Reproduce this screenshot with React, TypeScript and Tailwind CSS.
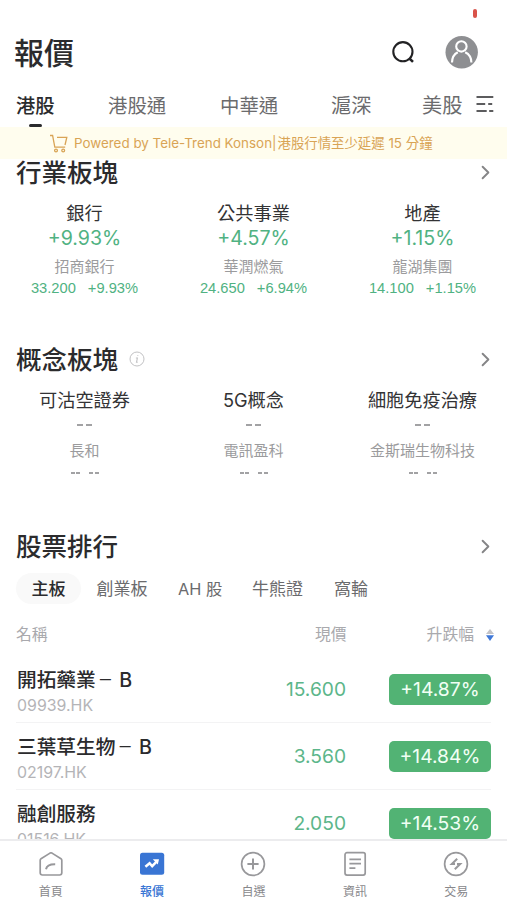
import { ChevronRight } from "lucide-react";
import clsx from "clsx";

const markets = [
  { label: "港股", pos: "w-[92px] text-[19.3px]" },
  { label: "港股通", pos: "w-[112px] text-[19.4px]" },
  { label: "中華通", pos: "w-[111px] text-[19.4px]" },
  { label: "滬深", pos: "w-[91px] text-[20.2px]" },
  { label: "美股", pos: "w-[54px] text-[20.2px]" },
];

const industries = [
  { name: "銀行", change: "+9.93%", stock: "招商銀行", price: "33.200", pct: "+9.93%" },
  { name: "公共事業", change: "+4.57%", stock: "華潤燃氣", price: "24.650", pct: "+6.94%" },
  { name: "地產", change: "+1.15%", stock: "龍湖集團", price: "14.100", pct: "+1.15%" },
];

const concepts = [
  { name: "可沽空證券", stock: "長和" },
  { name: "5G概念", stock: "電訊盈科" },
  { name: "細胞免疫治療", stock: "金斯瑞生物科技" },
];

const boards = [
  { label: "主板", cls: "w-[65px] rounded-full bg-[#f9f9f9] font-medium text-[#2b2b2d]" },
  { label: "創業板", cls: "ml-[15px] w-[52px] text-[#6b6b6d]" },
  { label: "AH 股", cls: "ml-[30px] w-[43px] text-[16.3px] text-[#6b6b6d]" },
  { label: "牛熊證", cls: "ml-[31px] w-[51px] text-[#6b6b6d]" },
  { label: "窩輪", cls: "ml-[31px] text-[#6b6b6d]" },
];

const rows = [
  { name: "開拓藥業", classB: true, code: "09939.HK", price: "15.600", pct: "+14.87%" },
  { name: "三葉草生物", classB: true, code: "02197.HK", price: "3.560", pct: "+14.84%" },
  { name: "融創服務", classB: false, code: "01516.HK", price: "2.050", pct: "+14.53%" },
];

function SectionTitle({ title, info }: { title: string; info?: boolean }) {
  return (
    <div className="flex h-9 items-center pr-[10px] pl-4">
      <h2 className="mt-[2px] text-[25.5px] font-medium text-[#2b2b2d]">{title}</h2>
      {info && (
        <svg width="16" height="16" viewBox="0 0 16 16" fill="none" stroke="#c2c2c4" className="ml-[11px]">
          <circle cx="8" cy="8" r="7" />
          <path d="M8.8 4.2v.9M6.9 7h1.5l-.9 4.3h1.2" strokeWidth="1.1" />
        </svg>
      )}
      <ChevronRight size={23} strokeWidth={2} className="ml-auto text-[#858587]" />
    </div>
  );
}

// two short strokes shown while a quote is missing
function Dashes({ small }: { small?: boolean }) {
  return (
    <span className={clsx("flex", small ? "gap-[1.5px]" : "gap-[3px]")}>
      <i className={clsx("h-[1.5px] bg-[#a2a2a4]", small ? "w-[4px]" : "w-[6px]")} />
      <i className={clsx("h-[1.5px] bg-[#a2a2a4]", small ? "w-[4px]" : "w-[6px]")} />
    </span>
  );
}

function Header() {
  return (
    <header>
      <div className="flex h-[27px] justify-end pr-[30px]">
        <span className="mt-[9px] h-[9px] w-[4px] rounded-full bg-[#d9534a]" />
      </div>
      <div className="flex h-[50px] items-center pr-[29px] pl-[14px]">
        <h1 className="mt-[2px] text-[30px] font-medium text-[#2b2b2d]">報價</h1>
        <svg width="26" height="26" viewBox="0 0 26 26" fill="none" stroke="#222224" strokeWidth="2.1" className="ml-auto">
          <circle cx="12.9" cy="12.7" r="9.6" />
          <path d="M19.4 19.5l3.6 3.4" strokeWidth="2.6" />
        </svg>
        <svg width="33" height="33" viewBox="0 0 33 33" fill="none" stroke="#fff" strokeWidth="2.1" className="ml-[29px]">
          <circle cx="16.7" cy="16.3" r="16.2" fill="#8e8f92" stroke="none" />
          <circle cx="16.4" cy="10.4" r="5.2" />
          <path d="M7 26.4c.1-4.6 2.2-8.4 5.8-10.2M26.4 26.4c-.1-4.6-2.4-8.4-6.2-10.2" />
        </svg>
      </div>
      <div className="flex h-[50px] items-stretch pl-4">
        {markets.map((m, i) => (
          <div key={m.label} className={clsx("flex shrink-0 flex-col", m.pos)}>
            <span
              className={clsx(
                "mt-[14px] h-[29px] leading-[30px]",
                i === 0 ? "font-medium text-[#2b2b2d]" : "text-[#6b6b6d]",
              )}
            >
              {m.label}
            </span>
            {i === 0 && <span className="mt-[4px] ml-[13px] h-[3.5px] w-[13px] rounded-full bg-[#2b2b2d]" />}
          </div>
        ))}
        <svg width="18" height="18" viewBox="0 0 18 18" fill="none" stroke="#5c5c5e" strokeWidth="1.9" className="mt-[18px]">
          <path d="M.5 2h16.8M.5 9h8.7M12.2 9h4M.5 16h10.2M13.2 16h4.1" />
        </svg>
      </div>
      <div className="flex h-8 items-center bg-[#fffdee] pl-[49px] text-[#d9a455]">
        <svg width="19" height="19" viewBox="0 0 19 19" fill="none" stroke="currentColor" strokeWidth="1.3">
          <path d="M1 1.5h2.6l2.2 11.7h10.4M8 3.3h9.8L16 11" />
          <circle cx="7" cy="16.5" r="1.4" />
          <circle cx="14.2" cy="16.5" r="1.4" />
        </svg>
        <span className="mt-px ml-[6px] text-[13.4px] whitespace-nowrap">Powered by Tele-Trend Konson|</span>
        <span className="ml-px text-[13.4px] whitespace-nowrap">港股行情至少延遲 15 分鐘</span>
      </div>
    </header>
  );
}

function StockTable() {
  return (
    <section>
      <div className="flex h-[43px] items-center text-[15.8px] text-[#a9a9ad]">
        <span className="ml-4">名稱</span>
        <span className="ml-auto">現價</span>
        <span className="ml-[80px]">升跌幅</span>
        <svg width="8" height="12" viewBox="0 0 8 12" className="mr-[13px] ml-[12px]">
          <path d="M4 0l4 5H0z" fill="#c3c3c7" />
          <path d="M0 6.3h8L4 12z" fill="#3f78d8" />
        </svg>
      </div>
      {rows.map((r) => (
        <div key={r.code} className="mr-4 ml-4 flex h-[67.2px] shrink-0 items-center border-b border-[#f3f3f4]">
          <div className="pt-[5px] pl-px">
            <div className="h-[29px] text-[19.7px] leading-[30px] font-medium whitespace-nowrap text-[#2b2b2d]">
              {r.name}
              {r.classB && (
                <>
                  <span className="mr-px ml-[2px] inline-block align-[2px] text-[15.3px] leading-none">－</span> B
                </>
              )}
            </div>
            <div className="h-[24px] text-[15.9px] leading-[24px] text-[#b4b4b7]">{r.code}</div>
          </div>
          <span className="ml-auto text-[19.2px] text-[#5cb68a]">{r.price}</span>
          <span className="ml-[43px] flex h-[31px] w-[102px] items-center justify-center rounded-[5px] bg-[#52b374] text-[19.3px] text-[#f1fff4]">
            {r.pct}
          </span>
        </div>
      ))}
    </section>
  );
}

function TabBar() {
  const svg = { width: 26, height: 26, viewBox: "0 0 26 26", fill: "none", stroke: "#98989b", strokeWidth: 1.7 };
  const tabs = [
    {
      label: "首頁",
      icon: (
        <svg {...svg} strokeLinejoin="round">
          <path d="M2.2 9.2Q2.2 8.3 3 7.8L12 2.1Q13 1.5 14 2.1L23 7.8Q23.8 8.3 23.8 9.2V21.8Q23.8 24 21.6 24H4.4Q2.2 24 2.2 21.8z" />
          <path d="M8 18.2c.7-3.5 3.5-5 9.2-4.9" strokeWidth="2" />
        </svg>
      ),
    },
    {
      label: "報價",
      icon: (
        <svg {...svg} stroke="#fff">
          <rect x="1" y="1.8" width="24.2" height="22" rx="2.5" fill="#3975d4" stroke="none" />
          <path d="M6.4 15.8l4.2-3.6 2.6 3 4.6-4.8" strokeWidth="2.5" />
          <path d="M13.8 8.2h6.2l-1.2 5.4z" fill="#fff" stroke="none" />
        </svg>
      ),
    },
    {
      label: "自選",
      icon: (
        <svg {...svg}>
          <circle cx="13" cy="13" r="11.4" />
          <path d="M13 7.4v11.2M7.4 13h11.2" strokeWidth="2" />
        </svg>
      ),
    },
    {
      label: "資訊",
      icon: (
        <svg {...svg}>
          <rect x="3" y="1.7" width="20.2" height="22.4" rx="2" />
          <path d="M7.4 8.3h11.6M7.4 12.7h11.6M7.4 17.1h6" strokeWidth="1.8" />
        </svg>
      ),
    },
    {
      label: "交易",
      icon: (
        <svg {...svg}>
          <circle cx="13" cy="13" r="11.4" />
          <path d="M14.2 7.8l-5.4 5.3h3.2M11.8 18.2l5.4-5.3h-3.2" strokeWidth="2" />
        </svg>
      ),
    },
  ];
  return (
    <nav className="grid h-[61px] shrink-0 grid-cols-5 border-t-2 border-[#ececee] bg-white">
      {tabs.map((t) => (
        <div key={t.label} className="flex flex-col items-center pt-[10px]">
          {t.icon}
          <span
            className={clsx(
              "mt-[5px] text-[12px] leading-[20px]",
              t.label === "報價" ? "font-medium text-[#3975d4]" : "text-[#88888b]",
            )}
          >
            {t.label}
          </span>
        </div>
      ))}
    </nav>
  );
}

export default function App() {
  return (
    <div className="flex h-[900px] w-[507px] flex-col overflow-hidden bg-white font-['Inter','Noto_Sans_CJK_TC',sans-serif]">
      <main className="min-h-0 flex-1 overflow-hidden">
        <Header />
        <section className="-mt-[5px]">
          <SectionTitle title="行業板塊" />
          <div className="grid grid-cols-3 pt-[9px]">
            {industries.map((s) => (
              <div key={s.name} className="flex flex-col items-center">
                <span className="h-[27px] text-[18.2px] leading-[29px] text-[#333335]">{s.name}</span>
                <span className="h-[24px] text-[19.6px] leading-[24px] text-[#50b282]">{s.change}</span>
                <span className="mt-[5px] h-[24px] text-[15px] leading-[24px] text-[#9b9b9d]">{s.stock}</span>
                <span className="flex h-[20px] gap-3 font-['Liberation_Sans',sans-serif] text-[14.7px] leading-[19px] text-[#50b282]">
                  <span>{s.price}</span>
                  <span>{s.pct}</span>
                </span>
              </div>
            ))}
          </div>
        </section>
        <section className="mt-[42px]">
          <SectionTitle title="概念板塊" info />
          <div className="grid grid-cols-3 pt-[9px]">
            {concepts.map((s) => (
              <div key={s.name} className="flex flex-col items-center">
                <span className="h-[27px] text-[18.2px] leading-[29px] text-[#333335]">{s.name}</span>
                <span className="flex h-[24px] items-center">
                  <Dashes />
                </span>
                <span className="mt-[2px] h-[24px] text-[15px] leading-[24px] text-[#9b9b9d]">{s.stock}</span>
                <span className="flex h-[20px] items-center gap-[9px]">
                  <Dashes small />
                  <Dashes small />
                </span>
              </div>
            ))}
          </div>
        </section>
        <section className="mt-[45px]">
          <SectionTitle title="股票排行" />
          <div className="mt-[9px] flex h-[31px] items-stretch pl-4 text-[17px] leading-[32px]">
            {boards.map((b) => (
              <span key={b.label} className={clsx("text-center leading-[32px] whitespace-nowrap", b.cls)}>
                {b.label}
              </span>
            ))}
          </div>
        </section>
        <div className="mt-[9px]">
          <StockTable />
        </div>
      </main>
      <TabBar />
    </div>
  );
}
